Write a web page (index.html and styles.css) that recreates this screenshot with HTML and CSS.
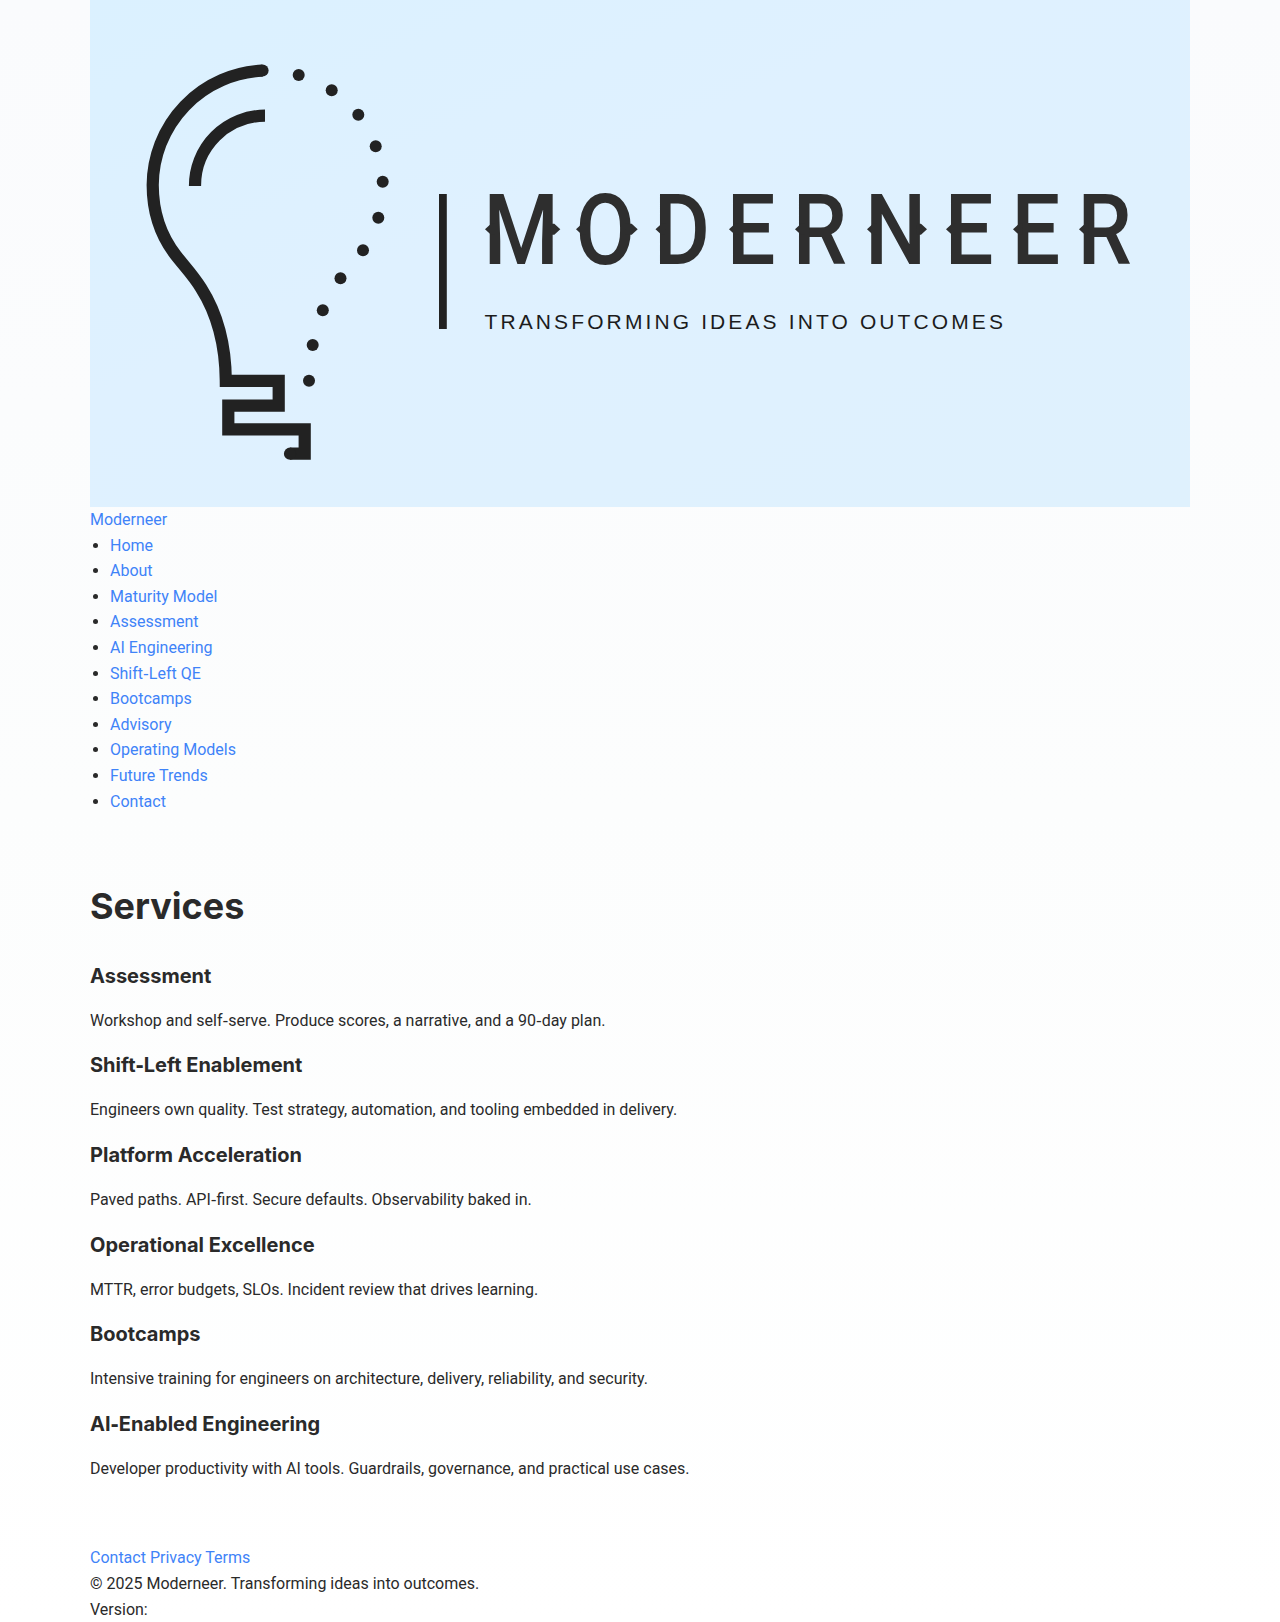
FILE: index.html
```html
<!DOCTYPE html>
<html lang="en">
<head>
<meta charset="utf-8">
<title>Services – Moderneer</title>
<link rel="stylesheet" href="styles.css">
</head>
<body>
<header class="container">
  <a class="brand" href="#">
    <svg class="logo" viewBox="90 0 1100 507.100" role="img" aria-label="Moderneer logo">
      <defs>
        <linearGradient id="sky" x1="0" y1="0" x2="1" y2="1">
          <stop offset="0" stop-color="#dbf1ff"/>
          <stop offset="0.4" stop-color="#dff1ff"/>
          <stop offset="1" stop-color="#dff1fd"/>
        </linearGradient>
      </defs>
      <rect x="90" y="0" width="1100" height="507.100" fill="url(#sky)"/>
      <!-- bulb outline and base -->
      <g fill="none" stroke="#222" stroke-width="12.2">
        <path d="M262.500 70.700A115 115 0 0 0 152.700 185C152.700 212 160 235 176 255.500C185 267 193 275 201 288C215 310 225.500 341 225.800 380.800H278.700V405.700H228.300V429.300H304.700V453.700H290"/>
        <path d="M265 115.700A70 70 0 0 0 195 186"/>
      </g>
      <g fill="#222">
        <circle cx="262.500" cy="70.500" r="6.100"/><circle cx="290" cy="453.700" r="6.100"/>
        <circle cx="298.700" cy="75" r="6"/><circle cx="331.700" cy="90.300" r="6"/>
        <circle cx="358.300" cy="114.700" r="6"/><circle cx="375.700" cy="146.200" r="6"/>
        <circle cx="382.700" cy="181.700" r="6"/><circle cx="378.300" cy="217.700" r="6"/>
        <circle cx="363" cy="250.300" r="6"/><circle cx="340.500" cy="278.300" r="6"/>
        <circle cx="322.800" cy="310.300" r="6"/><circle cx="312.700" cy="345" r="6"/>
        <circle cx="309" cy="380.700" r="6"/>
        <rect x="439" y="194" width="7.800" height="135"/>
      </g>
      <g class="wordmark">
        <text transform="translate(0 263.700) scale(.88 1)" x="549.500 654 743 826 901 983 1073.500 1149.500 1224.500" y="0">MODERNEER</text>
        <!-- spurs on the letter stems -->
        <path d="M485 229.300l6-5.500h4v11h-4zM576 229.300l6-5.500h4v11h-4zM655.500 229.300l6-5.500h4v11h-4zM729 229.300l6-5.500h4v11h-4zM795 229.300l6-5.500h4v11h-4zM867 229.300l6-5.500h4v11h-4zM946 229.300l6-5.500h4v11h-4zM1013 229.300l6-5.500h4v11h-4zM1079 229.300l6-5.500h4v11h-4zM560.300 229.300l-6-5.500h-4v11h4zM637.700 229.300l-6-5.500h-6v11h6zM927 229.300l-6-5.500h-4v11h4z"/>
      </g>
      <text class="tagline" x="484.500" y="329" textLength="518.500">TRANSFORMING IDEAS INTO OUTCOMES</text>
    </svg>
    <span>Moderneer</span>
  </a>
  <nav>
    <ul class="nav-list">
      <li><a href="#">Home</a></li>
      <li><a href="#">About</a></li>
      <li><a href="#">Maturity Model</a></li>
      <li><a href="#">Assessment</a></li>
      <li><a href="#">AI Engineering</a></li>
      <li><a href="#">Shift<span class="hy">‑</span>Left QE</a></li>
      <li><a href="#">Bootcamps</a></li>
      <li><a href="#">Advisory</a></li>
      <li><a href="#">Operating Models</a></li>
      <li><a href="#">Future Trends</a></li>
      <li><a href="#">Contact</a></li>
    </ul>
  </nav>
</header>
<main class="container services">
  <h1>Services</h1>
  <h3>Assessment</h3>
  <p>Workshop and self<span class="hy">‑</span>serve. Produce scores, a narrative, and a 90<span class="hy">‑</span>day plan.</p>
  <h3>Shift<span class="hy">‑</span>Left Enablement</h3>
  <p>Engineers own quality. Test strategy, automation, and tooling embedded in delivery.</p>
  <h3>Platform Acceleration</h3>
  <p>Paved paths. API<span class="hy">‑</span>first. Secure defaults. Observability baked in.</p>
  <h3>Operational Excellence</h3>
  <p>MTTR, error budgets, SLOs. Incident review that drives learning.</p>
  <h3>Bootcamps</h3>
  <p>Intensive training for engineers on architecture, delivery, reliability, and security.</p>
  <h3>AI<span class="hy">‑</span>Enabled Engineering</h3>
  <p>Developer productivity with AI tools. Guardrails, governance, and practical use cases.</p>
</main>
<footer class="container">
  <div><a href="#">Contact</a> <a href="#">Privacy</a> <a href="#">Terms</a></div>
  <div>© 2025 Moderneer. Transforming ideas into outcomes.</div>
  <div>Version:</div>
</footer>
</body>
</html>
```
FILE: styles.css
```css
* { box-sizing: border-box; }

body {
  margin: 0;
  font-family: Roboto, "Liberation Sans", sans-serif;
  font-size: 16px;
  line-height: 1.6;
  color: #2a2a2a;
  background: linear-gradient(180deg, #fafbfd 0%, #fcfdfd 50%, #ffffff 100%);
}

a { color: #3f83f8; text-decoration: none; }

.container { width: 1100px; margin: 0 auto; }

.brand, .logo { display: block; }
.brand span { display: block; }
.logo { width: 1100px; height: 507.1px; }

.wordmark {
  font-family: Roboto, sans-serif;
  font-weight: 500;
  font-size: 98px;
  fill: #2e2e2e;
}

.tagline {
  font-family: "Liberation Sans", Arial, sans-serif;
  font-size: 21px;
  fill: #1c1c1c;
}

.nav-list { margin: 0; padding-left: 20px; }

/* wider non-breaking hyphen */
.hy { font-family: "DejaVu Sans", sans-serif; line-height: 0; }

.services { padding: 40px 0 48px; display: flow-root; }

h1, h3 { font-family: Inter, sans-serif; }
h1 { font-size: 36px; font-weight: 700; margin: 24px 0; }
h3 { font-size: 20px; font-weight: 700; margin: 16px 0; }
p { margin: 16px 0; }
```
